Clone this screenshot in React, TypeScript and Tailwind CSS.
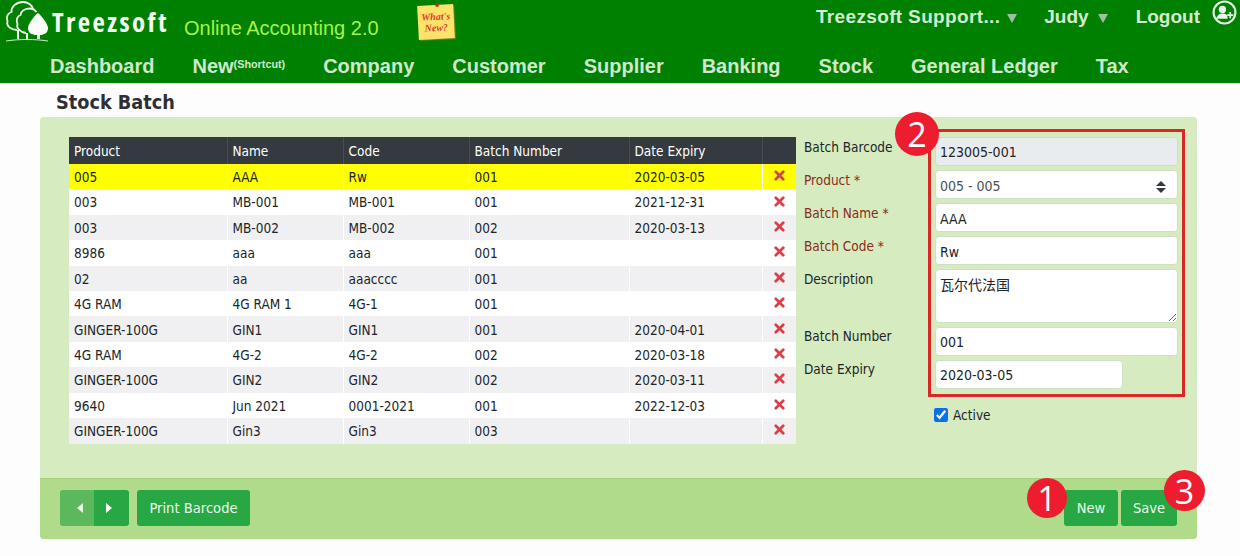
import { X } from "lucide-react";

const FONT = "font-['DejaVu_Sans_Condensed','DejaVu_Sans',sans-serif] [font-stretch:condensed]";

const navItems = ["Dashboard", "New", "Company", "Customer", "Supplier", "Banking", "Stock", "General Ledger", "Tax"];

const rows = [
  ["005", "AAA", "Rw", "001", "2020-03-05"],
  ["003", "MB-001", "MB-001", "001", "2021-12-31"],
  ["003", "MB-002", "MB-002", "002", "2020-03-13"],
  ["8986", "aaa", "aaa", "001", ""],
  ["02", "aa", "aaacccc", "001", ""],
  ["4G RAM", "4G RAM 1", "4G-1", "001", ""],
  ["GINGER-100G", "GIN1", "GIN1", "001", "2020-04-01"],
  ["4G RAM", "4G-2", "4G-2", "002", "2020-03-18"],
  ["GINGER-100G", "GIN2", "GIN2", "002", "2020-03-11"],
  ["9640", "Jun 2021", "0001-2021", "001", "2022-12-03"],
  ["GINGER-100G", "Gin3", "Gin3", "003", ""],
];

function Logo() {
  return (
    <svg width="44" height="42" viewBox="0 0 44 42" fill="none" className="shrink-0">
      <path d="M12 29 C6 29 1 25 2.500 20 C0.500 16 3 12 6.500 11 C6 6 11 1 18 1 C23 1 27 4 28 8" stroke="#f2fbf2" strokeWidth="1.800" />
      <path d="M21 32 C15 31 11 27 12.500 23 C10.500 19 12.500 15 15.500 14 C16 10 20 7.500 25 7.500 C28 7.500 30 9 31.500 11" stroke="#f2fbf2" strokeWidth="1.800" />
      <path d="M33 12 C36 14 43 23 43 27 C43 32 39 34 35 34 L35 38 L32 38 L32 34 C27 34 23 32 23 27 C23 23 29 15 33 12 Z" fill="#fafffa" />
      <path d="M13 29 L13 38 M22 32 L22 38" stroke="#f2fbf2" strokeWidth="2" />
      <path d="M1 40 C14 38 30 38 43 40" stroke="#cfe8cf" strokeWidth="1" />
    </svg>
  );
}

function StickyNote() {
  return (
    <div className="relative ml-[39px] mt-[5px] flex h-[34px] w-[36px] rotate-[-3deg] flex-col items-center justify-center bg-[#fde36a] font-['Liberation_Serif',serif] text-[10px] font-bold italic leading-[11px] text-[#d8432a] shadow-[1px_1px_1px_#6b8e23]">
      <span className="absolute left-[18px] top-[-2px] h-[4px] w-[4px] rounded-full bg-[#b5382a]" />
      <span>What's</span>
      <span>New?</span>
    </div>
  );
}

function Badge({ n, className }: { n: string; className: string }) {
  return (
    <div className={`absolute flex items-center justify-center rounded-full bg-[#ed1c2e] font-['Open_Sans',sans-serif] text-[34px] leading-none text-white [font-stretch:normal] ${className}`}>
      {n}
    </div>
  );
}

function Field({ label, required, children, className, labelClassName }: { label: string; required?: boolean; children: React.ReactNode; className?: string; labelClassName?: string }) {
  return (
    <div className={`flex ${className ?? "h-[33px]"}`}>
      <div className={`w-[131px] shrink-0 text-[13.500px] leading-[20px] ${required ? "text-[#8b2a1a]" : "text-[#212529]"} ${labelClassName ?? ""}`}>
        {label}
        {required ? " *" : ""}
      </div>
      <div className="flex-1">{children}</div>
    </div>
  );
}

const inputClass = "flex h-[29px] w-full items-center rounded-[4px] border border-[#cfe0c2] bg-white px-[4px] pt-[2px] text-[14px] text-[#212529]";

export default function App() {
  return (
    <div className={`relative h-[556px] w-[1240px] overflow-hidden bg-[#fdfdfd] text-[#212529] ${FONT}`}>
      <header className="h-[84px] border-b border-[#d5f0d5] bg-[#008000] font-['Liberation_Sans',sans-serif] [font-stretch:normal]">
        <div className="flex h-[47px]">
          <div className="ml-[5px] mt-[1px]">
            <Logo />
          </div>
          <span className="ml-[3px] mt-[3px] w-[117px] whitespace-nowrap font-['Open_Sans',sans-serif] text-[27px] font-bold leading-[38px] tracking-[2.400px] text-[#f5fff5] [font-stretch:condensed]">Treezsoft</span>
          <span className="ml-[15px] mt-[15px] text-[20px] leading-[26px] text-[#a6f24a]">Online Accounting 2.0</span>
          <StickyNote />
          <div className="ml-auto mt-[6px] flex items-start text-[19px] font-bold leading-[22px] text-[#d3ecd3]">
            <span className="tracking-[0.350px]">Treezsoft Support...</span>
            <span className="ml-[7px] mt-[8px] h-0 w-0 border-x-[5px] border-t-[9px] border-x-transparent border-t-[#9fbf9f]" />
            <span className="ml-[27px]">Judy</span>
            <span className="ml-[9px] mt-[8px] h-0 w-0 border-x-[5px] border-t-[9px] border-x-transparent border-t-[#9fbf9f]" />
            <span className="ml-[28px]">Logout</span>
            <svg width="25" height="25" viewBox="0 0 24 24" className="ml-[12px] mr-[3px] mt-[-6px]">
              <circle cx="12" cy="12" r="10.500" fill="none" stroke="#e8f5e8" strokeWidth="2" />
              <circle cx="10" cy="9" r="3.500" fill="#e8f5e8" />
              <path d="M4 18 C5 14 8 13 10 13 C13 13 15 14 15 18 Z" fill="#e8f5e8" />
              <path d="M17.500 11.500 v6 M14.500 14.500 h6" stroke="#e8f5e8" strokeWidth="1.600" />
            </svg>
          </div>
        </div>
        <nav className="ml-[50px] mt-[6px] flex gap-[38px] text-[20px] font-bold leading-[26px] text-[#cfe8cf]">
          {navItems.map((item) => (
            <span key={item} className="whitespace-nowrap">
              {item}
              {item === "New" ? <sup className="text-[10.800px] font-bold leading-none">(Shortcut)</sup> : null}
            </span>
          ))}
        </nav>
      </header>

      <h1 className="ml-[56px] mt-[7px] text-[19.700px] font-bold leading-[24px] text-[#2f2f33]">Stock Batch</h1>

      <main className="mx-[40px] mt-[2px] w-[1157px] overflow-hidden rounded-[4px] bg-[#d6ecc0]">
        <div className="flex h-[361px] pl-[29px] pt-[20px]">
          <table className="h-[306.500px] w-[727px] table-fixed border-collapse self-start text-[13.500px]">
            <colgroup>
              <col className="w-[158px]" />
              <col className="w-[116px]" />
              <col className="w-[126px]" />
              <col className="w-[160px]" />
              <col className="w-[133px]" />
              <col className="w-[34px]" />
            </colgroup>
            <thead>
              <tr className="h-[27px] bg-[#343a40] text-left text-white">
                {["Product", "Name", "Code", "Batch Number", "Date Expiry", ""].map((h, i) => (
                  <th key={i} className="border-x border-[#454d55] px-[5px] pt-[2px] font-normal first:border-l-0 last:border-r-0">
                    {h}
                  </th>
                ))}
              </tr>
            </thead>
            <tbody>
              {rows.map((row, i) => (
                <tr key={i} className={`h-[25.400px] ${i === 0 ? "bg-[#ffff00]" : i % 2 === 0 ? "bg-[#f0f0f2]" : "bg-white"}`}>
                  {row.map((cell, j) => (
                    <td key={j} className="border-x border-white px-[5px] pb-0 pt-[1px] first:border-l-0">
                      {cell}
                    </td>
                  ))}
                  <td className="p-0">
                    <X size={15} strokeWidth={4.500} className="mx-auto -translate-y-[1px] text-[#d84048]" />
                  </td>
                </tr>
              ))}
            </tbody>
          </table>

          <form className="ml-[8px] w-[374px]">
            <Field label="Batch Barcode">
              <div className={`${inputClass} !bg-[#e9ecef]`}>123005-001</div>
            </Field>
            <Field label="Product" required>
              <div className={`${inputClass} justify-between !pt-[4px] !text-[#495057]`}>
                005 - 005
                <span className="mr-[7px] flex flex-col gap-[2px]">
                  <span className="h-0 w-0 border-x-[5px] border-b-[5px] border-x-transparent border-b-[#343a40]" />
                  <span className="h-0 w-0 border-x-[5px] border-t-[5px] border-x-transparent border-t-[#343a40]" />
                </span>
              </div>
            </Field>
            <Field label="Batch Name" required>
              <div className={`${inputClass} !pt-[4px]`}>AAA</div>
            </Field>
            <Field label="Batch Code" required>
              <div className={`${inputClass} !pt-[4px]`}>Rw</div>
            </Field>
            <Field label="Description" className="h-[58px]">
              <textarea
                readOnly
                value="瓦尔代法国"
                className="h-[54px] w-full rounded-[4px] border border-[#cfe0c2] bg-white px-[4px] pt-[4px] font-['Noto_Sans_CJK_SC',sans-serif] text-[14px] text-[#212529]"
              />
            </Field>
            <Field label="Batch Number" labelClassName="-mt-[1px]">
              <div className={inputClass}>001</div>
            </Field>
            <Field label="Date Expiry" labelClassName="-mt-[1px]">
              <div className={`${inputClass} !w-[188px]`}>2020-03-05</div>
            </Field>
            <label className="ml-[130px] mt-[12px] flex items-center gap-[5px] text-[13.500px] leading-[20px]">
              <input type="checkbox" readOnly checked className="h-[14px] w-[14px] accent-[#0b6fe8]" />
              Active
            </label>
          </form>
        </div>

        <footer className="flex h-[61px] items-center border-t border-[#a4cf7e] bg-[#b0db8a] px-[20px] pb-[3px]">
          <div className="flex h-[36px] overflow-hidden rounded-[3px] text-white">
            <span className="flex w-[34px] items-center justify-center bg-[#5cb85c] pl-[6px]">
              <span className="h-0 w-0 border-y-[5px] border-r-[6px] border-y-transparent border-r-[#e8f8e8]" />
            </span>
            <span className="flex w-[35px] items-center justify-center bg-[#28a745] pr-[6px]">
              <span className="h-0 w-0 border-y-[5px] border-l-[6px] border-y-transparent border-l-white" />
            </span>
          </div>
          <button className="ml-[8px] h-[36px] w-[113px] rounded-[3px] bg-[#28a745] text-[14.600px] text-[#eafbea]">Print Barcode</button>
          <button className="ml-auto h-[36px] w-[54px] rounded-[3px] bg-[#28a745] text-[14.600px] text-[#eafbea]">New</button>
          <button className="ml-[3px] h-[36px] w-[56px] rounded-[3px] bg-[#28a745] text-[14.600px] text-[#eafbea]">Save</button>
        </footer>
      </main>

      {/* highlight box and numbered callouts over the form */}
      <div className="absolute left-[928px] top-[129px] h-[268px] w-[257px] border-[3px] border-[#dc2626]" />
      <Badge n="2" className="left-[895px] top-[112px] h-[44px] w-[44px]" />
      <Badge n="1" className="left-[1027px] top-[478px] h-[40px] w-[40px]" />
      <Badge n="3" className="left-[1164px] top-[470px] h-[41px] w-[41px]" />
    </div>
  );
}
